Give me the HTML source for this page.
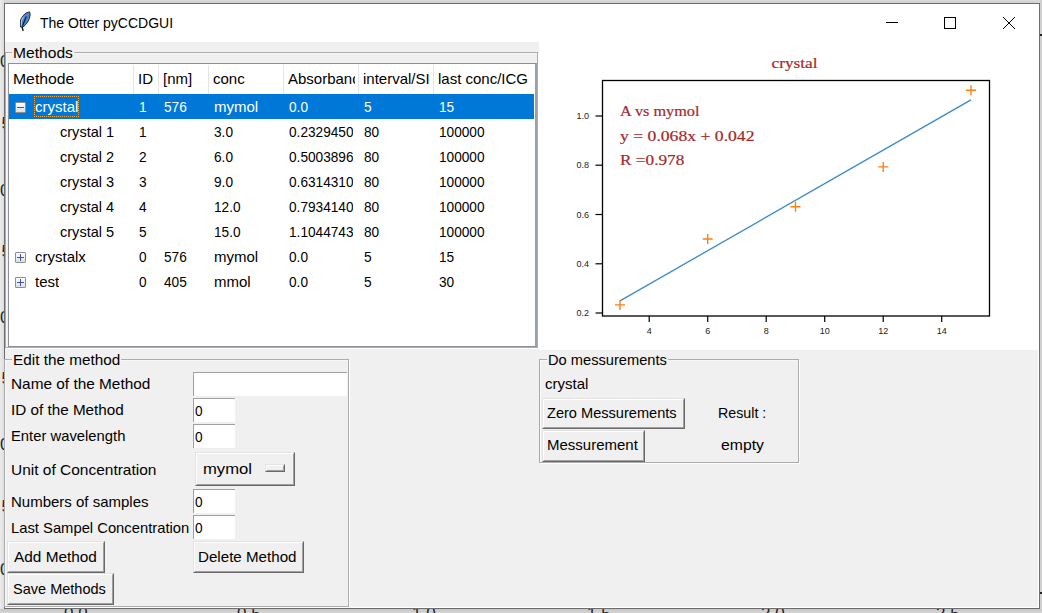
<!DOCTYPE html><html><head><meta charset="utf-8"><style>
body{margin:0;width:1042px;height:613px;overflow:hidden;position:relative;background:#e4e4e4;font-family:"Liberation Sans",sans-serif;}
.a{position:absolute}
.t{position:absolute;font-size:15px;line-height:17px;white-space:nowrap;color:#000}
.c{position:absolute;overflow:hidden;font-size:15px;line-height:17px;white-space:nowrap;color:#000}
.n{display:inline-block;transform:scaleX(0.91);transform-origin:0 0}
.btn{position:absolute;background:#f0f0f0;box-sizing:border-box;border-top:1px solid #e3e3e3;border-left:1px solid #e3e3e3;border-right:1px solid #696969;border-bottom:1px solid #696969;}
.btn::after{content:"";position:absolute;left:0;top:0;right:0;bottom:0;border-top:1px solid #fff;border-left:1px solid #fff;border-right:1px solid #a0a0a0;border-bottom:1px solid #a0a0a0;}
.ent{position:absolute;background:#fff;box-sizing:border-box;border-top:1px solid #a0a0a0;border-left:1px solid #a0a0a0;}
.grp{position:absolute;box-sizing:border-box;border:1px solid #acacac;box-shadow:inset 1px 1px 0 #f8f8f8, 1px 1px 0 #fff;}
.lbl{position:absolute;background:#f0f0f0;height:17px;font-size:15px;line-height:17px;padding:0 1px;white-space:nowrap}
.exp{position:absolute;width:11px;height:11px;box-sizing:border-box;border:1px solid #8f8f8f;border-radius:1px;background:linear-gradient(#fdfdfd,#dedede);}
</style></head><body>
<div class="a" style="left:0;top:0;width:1042px;height:3px;background:linear-gradient(#dadada,#d0d0d0)"></div>
<div class="a" style="left:0;top:0;width:4px;height:613px;background:linear-gradient(90deg,#ececec,#dcdcdc)"></div>
<div class="a" style="left:1040px;top:0;width:2px;height:613px;background:#d0d0d0"></div>
<div class="a" style="left:0;top:609px;width:1042px;height:4px;background:linear-gradient(#c6c6c6,#d6d6d6)"></div>
<div class="a" style="left:64px;top:605px;font-size:17px;line-height:17px;color:#262626;white-space:nowrap">0.0</div>
<div class="a" style="left:237px;top:605px;font-size:17px;line-height:17px;color:#262626;white-space:nowrap">0.5</div>
<div class="a" style="left:412px;top:605px;font-size:17px;line-height:17px;color:#262626;white-space:nowrap">1.0</div>
<div class="a" style="left:587px;top:605px;font-size:17px;line-height:17px;color:#262626;white-space:nowrap">1.5</div>
<div class="a" style="left:761px;top:605px;font-size:17px;line-height:17px;color:#262626;white-space:nowrap">2.0</div>
<div class="a" style="left:936px;top:605px;font-size:17px;line-height:17px;color:#262626;white-space:nowrap">2.5</div>
<div class="a" style="left:0px;top:52px;width:10px;font-size:17px;line-height:20px;color:#262626">0</div>
<div class="a" style="left:1.5px;top:114px;width:10px;font-size:17px;line-height:20px;color:#262626">5</div>
<div class="a" style="left:0px;top:180.5px;width:10px;font-size:17px;line-height:20px;color:#262626">0</div>
<div class="a" style="left:1.5px;top:242px;width:10px;font-size:17px;line-height:20px;color:#262626">5</div>
<div class="a" style="left:0px;top:307.5px;width:10px;font-size:17px;line-height:20px;color:#262626">0</div>
<div class="a" style="left:1.5px;top:368.5px;width:10px;font-size:17px;line-height:20px;color:#262626">5</div>
<div class="a" style="left:0px;top:434.5px;width:10px;font-size:17px;line-height:20px;color:#262626">0</div>
<div class="a" style="left:1.5px;top:496.5px;width:10px;font-size:17px;line-height:20px;color:#262626">5</div>
<div class="a" style="left:0px;top:560px;width:10px;font-size:17px;line-height:20px;color:#262626">0</div>
<div class="a" style="left:1040px;top:34px;width:2px;height:2px;background:#222"></div>
<div class="a" style="left:1040px;top:592px;width:2px;height:2px;background:#222"></div>
<div class="a" style="left:4px;top:3px;width:1036px;height:606px;box-sizing:border-box;border:1px solid #6e6e6e;background:#fff"></div>
<div class="a" style="left:40px;top:15px;font-size:14.6px;line-height:17px;white-space:nowrap;transform:scaleX(0.96);transform-origin:0 0">The Otter pyCCDGUI</div>
<div class="a" style="left:5px;top:42px;width:1034px;height:566px;background:#f0f0f0"></div>
<div class="a" style="left:5px;top:607px;width:1034px;height:1px;background:#fff"></div>
<div class="a" style="left:1038px;top:42px;width:1px;height:566px;background:#fff"></div>
<div class="a" style="left:539px;top:42px;width:500px;height:308px;background:#fff"></div>
<div class="grp" style="left:5px;top:52px;width:533px;height:296px"></div>
<div class="lbl" style="left:12px;top:44px;transform:scaleX(1.04);transform-origin:0 0">Methods</div>
<div class="a" style="left:8px;top:63px;width:529px;height:284px;box-sizing:border-box;border:1px solid #8c9198;border-right:2px solid #9aa0a8;background:#fff;overflow:hidden">
<div class="c" style="left:4px;top:6px;width:117px;transform:scaleX(1.05);transform-origin:0 0;">Methode</div>
<div class="a" style="left:124px;top:1px;width:1px;height:29px;background:#e5e5e5"></div>
<div class="c" style="left:129px;top:6px;width:17px;">ID</div>
<div class="a" style="left:149px;top:1px;width:1px;height:29px;background:#e5e5e5"></div>
<div class="c" style="left:154px;top:6px;width:42px;">[nm]</div>
<div class="a" style="left:199px;top:1px;width:1px;height:29px;background:#e5e5e5"></div>
<div class="c" style="left:204px;top:6px;width:67px;">conc</div>
<div class="a" style="left:274px;top:1px;width:1px;height:29px;background:#e5e5e5"></div>
<div class="c" style="left:279px;top:6px;width:67px;">Absorbance</div>
<div class="a" style="left:349px;top:1px;width:1px;height:29px;background:#e5e5e5"></div>
<div class="c" style="left:354px;top:6px;width:67px;">interval/SI</div>
<div class="a" style="left:424px;top:1px;width:1px;height:29px;background:#e5e5e5"></div>
<div class="c" style="left:429px;top:6px;width:92px;">last conc/ICG</div>
<div class="a" style="left:0;top:30px;width:525px;height:25px;background:#0078d7"></div>
<div class="a" style="left:25px;top:32px;width:45px;height:21px;box-sizing:border-box;border:1px dotted #f4a640"></div>
<div class="exp" style="left:6px;top:38px"><div class="a" style="left:1px;top:4px;width:7px;height:1px;background:#3f55a8"></div></div>
<div class="c" style="left:26px;top:34px;color:#fff;">crystal</div>
<div class="c" style="left:130px;top:34px;width:14px;color:#fff"><span class="n">1</span></div>
<div class="c" style="left:155px;top:34px;width:39px;color:#fff"><span class="n">576</span></div>
<div class="c" style="left:205px;top:34px;width:64px;color:#fff">mymol</div>
<div class="c" style="left:280px;top:34px;width:64px;color:#fff"><span class="n">0.0</span></div>
<div class="c" style="left:355px;top:34px;width:64px;color:#fff"><span class="n">5</span></div>
<div class="c" style="left:430px;top:34px;width:89px;color:#fff"><span class="n">15</span></div>
<div class="c" style="left:51px;top:59px;color:#000;transform:scaleX(0.97);transform-origin:0 0;">crystal 1</div>
<div class="c" style="left:130px;top:59px;width:14px;color:#000"><span class="n">1</span></div>
<div class="c" style="left:205px;top:59px;width:64px;color:#000"><span class="n">3.0</span></div>
<div class="c" style="left:280px;top:59px;width:64px;color:#000"><span class="n">0.23294501</span></div>
<div class="c" style="left:355px;top:59px;width:64px;color:#000"><span class="n">80</span></div>
<div class="c" style="left:430px;top:59px;width:89px;color:#000"><span class="n">100000</span></div>
<div class="c" style="left:51px;top:84px;color:#000;transform:scaleX(0.97);transform-origin:0 0;">crystal 2</div>
<div class="c" style="left:130px;top:84px;width:14px;color:#000"><span class="n">2</span></div>
<div class="c" style="left:205px;top:84px;width:64px;color:#000"><span class="n">6.0</span></div>
<div class="c" style="left:280px;top:84px;width:64px;color:#000"><span class="n">0.50038962</span></div>
<div class="c" style="left:355px;top:84px;width:64px;color:#000"><span class="n">80</span></div>
<div class="c" style="left:430px;top:84px;width:89px;color:#000"><span class="n">100000</span></div>
<div class="c" style="left:51px;top:109px;color:#000;transform:scaleX(0.97);transform-origin:0 0;">crystal 3</div>
<div class="c" style="left:130px;top:109px;width:14px;color:#000"><span class="n">3</span></div>
<div class="c" style="left:205px;top:109px;width:64px;color:#000"><span class="n">9.0</span></div>
<div class="c" style="left:280px;top:109px;width:64px;color:#000"><span class="n">0.63143104</span></div>
<div class="c" style="left:355px;top:109px;width:64px;color:#000"><span class="n">80</span></div>
<div class="c" style="left:430px;top:109px;width:89px;color:#000"><span class="n">100000</span></div>
<div class="c" style="left:51px;top:134px;color:#000;transform:scaleX(0.97);transform-origin:0 0;">crystal 4</div>
<div class="c" style="left:130px;top:134px;width:14px;color:#000"><span class="n">4</span></div>
<div class="c" style="left:205px;top:134px;width:64px;color:#000"><span class="n">12.0</span></div>
<div class="c" style="left:280px;top:134px;width:64px;color:#000"><span class="n">0.7934140</span></div>
<div class="c" style="left:355px;top:134px;width:64px;color:#000"><span class="n">80</span></div>
<div class="c" style="left:430px;top:134px;width:89px;color:#000"><span class="n">100000</span></div>
<div class="c" style="left:51px;top:159px;color:#000;transform:scaleX(0.97);transform-origin:0 0;">crystal 5</div>
<div class="c" style="left:130px;top:159px;width:14px;color:#000"><span class="n">5</span></div>
<div class="c" style="left:205px;top:159px;width:64px;color:#000"><span class="n">15.0</span></div>
<div class="c" style="left:280px;top:159px;width:64px;color:#000"><span class="n">1.10447432</span></div>
<div class="c" style="left:355px;top:159px;width:64px;color:#000"><span class="n">80</span></div>
<div class="c" style="left:430px;top:159px;width:89px;color:#000"><span class="n">100000</span></div>
<div class="exp" style="left:6px;top:188px"><div class="a" style="left:1px;top:4px;width:7px;height:1px;background:#3f55a8"></div><div class="a" style="left:4px;top:1px;width:1px;height:7px;background:#3f55a8"></div></div>
<div class="c" style="left:26px;top:184px;color:#000;">crystalx</div>
<div class="c" style="left:130px;top:184px;width:14px;color:#000"><span class="n">0</span></div>
<div class="c" style="left:155px;top:184px;width:39px;color:#000"><span class="n">576</span></div>
<div class="c" style="left:205px;top:184px;width:64px;color:#000">mymol</div>
<div class="c" style="left:280px;top:184px;width:64px;color:#000"><span class="n">0.0</span></div>
<div class="c" style="left:355px;top:184px;width:64px;color:#000"><span class="n">5</span></div>
<div class="c" style="left:430px;top:184px;width:89px;color:#000"><span class="n">15</span></div>
<div class="exp" style="left:6px;top:213px"><div class="a" style="left:1px;top:4px;width:7px;height:1px;background:#3f55a8"></div><div class="a" style="left:4px;top:1px;width:1px;height:7px;background:#3f55a8"></div></div>
<div class="c" style="left:26px;top:209px;color:#000;">test</div>
<div class="c" style="left:130px;top:209px;width:14px;color:#000"><span class="n">0</span></div>
<div class="c" style="left:155px;top:209px;width:39px;color:#000"><span class="n">405</span></div>
<div class="c" style="left:205px;top:209px;width:64px;color:#000">mmol</div>
<div class="c" style="left:280px;top:209px;width:64px;color:#000"><span class="n">0.0</span></div>
<div class="c" style="left:355px;top:209px;width:64px;color:#000"><span class="n">5</span></div>
<div class="c" style="left:430px;top:209px;width:89px;color:#000"><span class="n">30</span></div>
</div>
<div class="grp" style="left:4px;top:359px;width:345px;height:248px"></div>
<div class="lbl" style="left:12px;top:351px;transform:scaleX(1.02);transform-origin:0 0">Edit the method</div>
<div class="t" style="left:11px;top:375px;transform:scaleX(1.025);transform-origin:0 0;">Name of the Method</div>
<div class="t" style="left:11px;top:401px;transform:scaleX(1.017);transform-origin:0 0;">ID of the Method</div>
<div class="t" style="left:11px;top:427px;transform:scaleX(0.987);transform-origin:0 0;">Enter wavelength</div>
<div class="t" style="left:11px;top:461px;transform:scaleX(1.032);transform-origin:0 0;">Unit of Concentration</div>
<div class="t" style="left:11px;top:493px;">Numbers of samples</div>
<div class="t" style="left:11px;top:519px;transform:scaleX(0.985);transform-origin:0 0;">Last Sampel Concentration</div>
<div class="ent" style="left:193px;top:372px;width:154px;height:24px"></div>
<div class="ent" style="left:193px;top:398px;width:42px;height:24px"></div>
<div class="t" style="left:195px;top:402px;"><span class="n">0</span></div>
<div class="ent" style="left:193px;top:424px;width:42px;height:24px"></div>
<div class="t" style="left:195px;top:428px;"><span class="n">0</span></div>
<div class="ent" style="left:193px;top:489px;width:42px;height:24px"></div>
<div class="t" style="left:195px;top:493px;"><span class="n">0</span></div>
<div class="ent" style="left:193px;top:515px;width:42px;height:24px"></div>
<div class="t" style="left:195px;top:519px;"><span class="n">0</span></div>
<div class="btn" style="left:195px;top:452px;width:100px;height:34px"></div>
<div class="t" style="left:203px;top:460px;transform:scaleX(1.11);transform-origin:0 0;">mymol</div>
<div class="btn" style="left:265px;top:464px;width:20px;height:8px"></div>
<div class="btn" style="left:7px;top:541px;width:98px;height:32px"></div>
<div class="t" style="left:14px;top:548px;transform:scaleX(1.025);transform-origin:0 0;">Add Method</div>
<div class="btn" style="left:193px;top:541px;width:111px;height:32px"></div>
<div class="t" style="left:198px;top:548px;transform:scaleX(1.01);transform-origin:0 0;">Delete Method</div>
<div class="btn" style="left:7px;top:573px;width:107px;height:32px"></div>
<div class="t" style="left:13px;top:580px;transform:scaleX(0.968);transform-origin:0 0;">Save Methods</div>
<div class="grp" style="left:539px;top:359px;width:260px;height:104px"></div>
<div class="lbl" style="left:547px;top:351px;transform:scaleX(0.977);transform-origin:0 0">Do messurements</div>
<div class="t" style="left:545px;top:375px;">crystal</div>
<div class="btn" style="left:542px;top:398px;width:143px;height:31px"></div>
<div class="t" style="left:547px;top:404px;transform:scaleX(0.972);transform-origin:0 0;">Zero Messurements</div>
<div class="btn" style="left:542px;top:430px;width:103px;height:32px"></div>
<div class="t" style="left:547px;top:436px;">Messurement</div>
<div class="t" style="left:718px;top:404px;transform:scaleX(0.95);transform-origin:0 0;">Result :</div>
<div class="t" style="left:721px;top:436px;transform:scaleX(1.05);transform-origin:0 0;">empty</div>
<svg class="a" style="left:860px;top:4px" width="179" height="38" viewBox="860 4 179 38">
<path d="M886 22.5H898" stroke="#000" stroke-width="1"/>
<rect x="944.5" y="17.5" width="11" height="11" fill="none" stroke="#000" stroke-width="1"/>
<path d="M1003 17L1015 29M1015 17L1003 29" stroke="#000" stroke-width="1"/>
</svg>
<svg class="a" style="left:14px;top:8px" width="24" height="28" viewBox="14 8 24 28">
<path d="M20.4 26.8 L20.6 19.8 L23 15.8 L26 13 L29.6 11.9 L30.2 14.5 L29.4 18.5 L27.6 22 L25 25.3 L22.8 27.2 Z" fill="#4d88d6" stroke="#161616" stroke-width="0.9" stroke-linejoin="round"/>
<path d="M21.3 25.5 L21.5 20.5 L23.5 16.8" stroke="#9cc6f5" stroke-width="1.1" fill="none"/>
<path d="M22.6 26 L24.6 20.5 L26.4 16.5" stroke="#0b1526" stroke-width="1.1" fill="none"/>
<path d="M22 26.8 L23.2 31" stroke="#161616" stroke-width="1.4"/>
</svg>
<svg class="a" style="left:539px;top:42px" width="500" height="308" viewBox="539 42 500 308">
<line x1="620.0" y1="300.9" x2="971.0" y2="99.9" stroke="#3a8ac6" stroke-width="1.3"/>
<path d="M615.0 304.9H625.0M620.0 299.9V309.9" stroke="#ff7f0e" stroke-width="1.4"/>
<path d="M702.7 239.0H712.7M707.7 234.0V244.0" stroke="#ff7f0e" stroke-width="1.4"/>
<path d="M790.5 206.8H800.5M795.5 201.8V211.8" stroke="#ff7f0e" stroke-width="1.4"/>
<path d="M878.2 166.9H888.2M883.2 161.9V171.9" stroke="#ff7f0e" stroke-width="1.4"/>
<path d="M966.0 90.3H976.0M971.0 85.3V95.3" stroke="#ff7f0e" stroke-width="1.4"/>
<rect x="602.5" y="80.5" width="387" height="235.5" fill="none" stroke="#000" stroke-width="1.3"/>
<line x1="595.5" y1="313.0" x2="602" y2="313.0" stroke="#000" stroke-width="1.2"/>
<text x="589" y="316.0" text-anchor="end" font-family="Liberation Sans" font-size="9" fill="#222">0.2</text>
<line x1="595.5" y1="263.8" x2="602" y2="263.8" stroke="#000" stroke-width="1.2"/>
<text x="589" y="266.8" text-anchor="end" font-family="Liberation Sans" font-size="9" fill="#222">0.4</text>
<line x1="595.5" y1="214.5" x2="602" y2="214.5" stroke="#000" stroke-width="1.2"/>
<text x="589" y="217.5" text-anchor="end" font-family="Liberation Sans" font-size="9" fill="#222">0.6</text>
<line x1="595.5" y1="165.2" x2="602" y2="165.2" stroke="#000" stroke-width="1.2"/>
<text x="589" y="168.2" text-anchor="end" font-family="Liberation Sans" font-size="9" fill="#222">0.8</text>
<line x1="595.5" y1="116.0" x2="602" y2="116.0" stroke="#000" stroke-width="1.2"/>
<text x="589" y="119.0" text-anchor="end" font-family="Liberation Sans" font-size="9" fill="#222">1.0</text>
<line x1="649.2" y1="316" x2="649.2" y2="322" stroke="#000" stroke-width="1.2"/>
<text x="649.2" y="334.2" text-anchor="middle" font-family="Liberation Sans" font-size="9" fill="#222">4</text>
<line x1="707.7" y1="316" x2="707.7" y2="322" stroke="#000" stroke-width="1.2"/>
<text x="707.7" y="334.2" text-anchor="middle" font-family="Liberation Sans" font-size="9" fill="#222">6</text>
<line x1="766.2" y1="316" x2="766.2" y2="322" stroke="#000" stroke-width="1.2"/>
<text x="766.2" y="334.2" text-anchor="middle" font-family="Liberation Sans" font-size="9" fill="#222">8</text>
<line x1="824.7" y1="316" x2="824.7" y2="322" stroke="#000" stroke-width="1.2"/>
<text x="824.7" y="334.2" text-anchor="middle" font-family="Liberation Sans" font-size="9" fill="#222">10</text>
<line x1="883.2" y1="316" x2="883.2" y2="322" stroke="#000" stroke-width="1.2"/>
<text x="883.2" y="334.2" text-anchor="middle" font-family="Liberation Sans" font-size="9" fill="#222">12</text>
<line x1="941.7" y1="316" x2="941.7" y2="322" stroke="#000" stroke-width="1.2"/>
<text x="941.7" y="334.2" text-anchor="middle" font-family="Liberation Sans" font-size="9" fill="#222">14</text>
<text x="771.5" y="68.3" font-family="Liberation Serif" font-size="14" fill="#a52a2a" stroke="#a52a2a" stroke-width="0.2" textLength="46" lengthAdjust="spacingAndGlyphs">crystal</text>
<text x="620" y="116" font-family="Liberation Serif" font-size="14" fill="#a52a2a" stroke="#a52a2a" stroke-width="0.2" textLength="79.5" lengthAdjust="spacingAndGlyphs">A vs mymol</text>
<text x="620" y="140.5" font-family="Liberation Serif" font-size="14" fill="#a52a2a" stroke="#a52a2a" stroke-width="0.2" textLength="134.5" lengthAdjust="spacingAndGlyphs">y = 0.068x + 0.042</text>
<text x="620" y="164.5" font-family="Liberation Serif" font-size="14" fill="#a52a2a" stroke="#a52a2a" stroke-width="0.2" textLength="64.3" lengthAdjust="spacingAndGlyphs">R =0.978</text>
</svg>
</body></html>
